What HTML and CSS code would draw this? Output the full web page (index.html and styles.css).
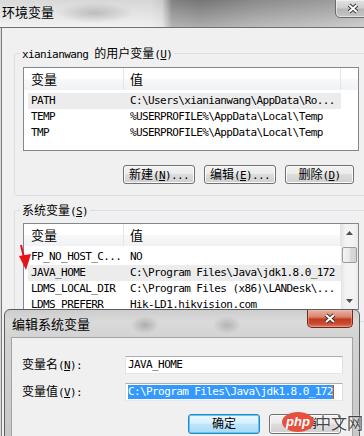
FILE: index.html
```html
<!DOCTYPE html>
<html lang="zh-CN">
<head>
    <meta charset="UTF-8">
    <title>环境变量</title>
    <link rel="stylesheet" href="styles.css">
</head>
<body>
    <div class="window">
        <div class="titlebar">
            <span class="title">环境变量</span>
            <span class="close close-gray">
                <svg width="12" height="11" viewBox="0 0 12 11"><path d="M2 2 L10 9 M10 2 L2 9" stroke="#3a3a3a" stroke-width="4"/><path d="M2 2 L10 9 M10 2 L2 9" stroke="#fff" stroke-width="2"/></svg>
            </span>
        </div>

        <div class="client">
            <fieldset class="group group-user">
                <legend>xianianwang <span class="zh">的用户变量</span>(<u>U</u>)</legend>
                <div class="list list-user">
                    <div class="list-body">
                        <div class="list-head">
                            <div class="head-col head-name">变量</div>
                            <div class="head-col head-value">值</div>
                        </div>
                        <div class="row selected"><span class="name">PATH</span><span class="value">C:\Users\xianianwang\AppData\Ro...</span></div>
                        <div class="row"><span class="name">TEMP</span><span class="value">%USERPROFILE%\AppData\Local\Temp</span></div>
                        <div class="row"><span class="name">TMP</span><span class="value">%USERPROFILE%\AppData\Local\Temp</span></div>
                    </div>
                    <div class="head-filler"></div>
                </div>
                <div class="btn-row">
                    <button class="btn"><span class="zh">新建</span>(<u>N</u>)...</button>
                    <button class="btn"><span class="zh">编辑</span>(<u>E</u>)...</button>
                    <button class="btn btn-narrow"><span class="zh">删除</span>(<u>D</u>)</button>
                </div>
            </fieldset>

            <fieldset class="group group-system">
                <legend><span class="zh">系统变量</span>(<u>S</u>)</legend>
                <div class="list list-system">
                    <div class="list-body">
                        <div class="list-head">
                            <div class="head-col head-name">变量</div>
                            <div class="head-col head-value">值</div>
                        </div>
                        <div class="row"><span class="name">FP_NO_HOST_C...</span><span class="value">NO</span></div>
                        <div class="row selected"><span class="name">JAVA_HOME</span><span class="value">C:\Program Files\Java\jdk1.8.0_172</span></div>
                        <div class="row"><span class="name">LDMS_LOCAL_DIR</span><span class="value">C:\Program Files (x86)\LANDesk\...</span></div>
                        <div class="row"><span class="name">LDMS_PREFERR</span><span class="value">Hik-LD1.hikvision.com</span></div>
                    </div>
                    <div class="scrollbar">
                        <div class="sb-btn"><svg width="7" height="4" viewBox="0 0 7 4"><polygon points="0,4 3.5,0 7,4" fill="#505050"/></svg></div>
                        <div class="sb-track"><div class="sb-thumb"></div></div>
                        <div class="sb-btn"><svg width="7" height="4" viewBox="0 0 7 4"><polygon points="0,0 7,0 3.5,4" fill="#505050"/></svg></div>
                    </div>
                </div>
            </fieldset>
        </div>
    </div>

    <!-- red arrow drawn on the screenshot -->
    <svg class="arrow" width="18" height="30" viewBox="0 0 18 30">
        <path d="M5 3 L9 20" stroke="#e5121b" stroke-width="2"/>
        <polygon points="3,14 15,12 10,28" fill="#e5121b"/>
    </svg>

    <div class="dialog">
        <div class="dialog-title">编辑系统变量</div>
        <span class="close close-red">
            <svg width="12" height="11" viewBox="0 0 12 11"><path d="M2 2 L10 9 M10 2 L2 9" stroke="#4a2a22" stroke-width="4"/><path d="M2 2 L10 9 M10 2 L2 9" stroke="#fff" stroke-width="2"/></svg>
        </span>
        <div class="dialog-client">
            <div class="form">
                <label><span class="zh">变量名</span>(<u>N</u>):</label>
                <div class="field">JAVA_HOME</div>
                <label><span class="zh">变量值</span>(<u>V</u>):</label>
                <div class="field"><span class="selection">C:\Program Files\Java\jdk1.8.0_172</span><span class="caret"></span></div>
            </div>
            <div class="dialog-buttons">
                <button class="btn btn-default"><span class="zh">确定</span></button>
                <button class="btn"><span class="zh">取消</span></button>
            </div>
        </div>
    </div>

    <div class="watermark">
        <span class="wm-php">php</span><span class="wm-cn">中文网</span>
    </div>
</body>
</html>
```

FILE: styles.css
```css
* {
    box-sizing: border-box;
}

body {
    margin: 0;
    width: 364px;
    height: 436px;
    overflow: hidden;
    position: relative;
    background: #d9d9d9;
    color: #000;
    font: 11px/16px "DejaVu Sans Mono", "Noto Sans CJK SC", monospace;
    letter-spacing: -0.6px;
}

.zh {
    font-family: "Noto Sans CJK SC", sans-serif;
    font-size: 12px;
    letter-spacing: 0;
}

u {
    text-decoration: underline;
}

/* outer window */
.titlebar {
    position: relative;
    height: 28px;
    border-bottom: 1px solid #707070;
    background:
        radial-gradient(ellipse 38px 10px at 95px 13px, rgba(140,140,140,0.45), transparent),
        linear-gradient(180deg, rgba(0,0,0,0.08) 0%, rgba(255,255,255,0.35) 100%),
        linear-gradient(90deg, #ececec 0, #e8e8e8 150px, #dcdcdc 162px, #8c8c8c 172px, #7f7f7f 200px, #979797 260px, #a7a7a7 330px, #b3b3b3 364px);
}

.title {
    display: block;
    padding-left: 2px;
    font: 13px/24px "Noto Sans CJK SC", sans-serif;
    letter-spacing: 0;
}

.close {
    position: absolute;
    top: -1px;
    width: 46px;
    height: 19px;
    display: flex;
    align-items: center;
    justify-content: center;
    border-radius: 0 0 5px 5px;
}

.close-gray {
    right: -17px;
    border: 1px solid #6a6a6a;
    background: linear-gradient(180deg, #e2e2e2 0%, #cfcfcf 45%, #b7b7b7 55%, #c6c6c6 100%);
    box-shadow: inset 0 0 0 1px rgba(255,255,255,0.5);
}

.close-gray svg {
    margin-right: 10px;
}

.client {
    height: 408px;
    margin-left: 1px;
    padding-top: 17px;
    border-left: 1px solid #7c7c7c;
    background: #f0f0f0;
    overflow: hidden;
}

/* group boxes */
.group {
    min-width: 0;
    margin: 0 -30px 0 12px;
    padding: 0 0 11px 8px;
    border: 1px solid #d5dfe5;
    border-radius: 3px;
}

.group legend {
    height: 16px;
    margin-left: -3px;
    padding: 0 2px;
    line-height: 16px;
}

.group-system {
    margin-top: 6px;
}

/* list views */
.list {
    display: flex;
    width: 336px;
    margin-top: 6px;
    border: 1px solid #828790;
    background: #fff;
}

.list-user {
    height: 84px;
}

.list-system {
    height: 87px;
    margin-top: 5px;
}

.list-body {
    width: 317px;
}

.list-head {
    display: flex;
    height: 22px;
    margin-bottom: 3px;
    background: linear-gradient(180deg, #fff 0%, #fff 50%, #f7f8f9 50%, #f1f2f4 100%);
}

.head-col {
    height: 22px;
    border-right: 1px solid #e3e5e8;
    font: 13px/22px "Noto Sans CJK SC", sans-serif;
    letter-spacing: 0;
}

.head-name {
    width: 100px;
    padding-left: 7px;
}

.head-value {
    flex: 1;
    padding-left: 6px;
}

.head-filler {
    width: 17px;
    height: 22px;
    background: linear-gradient(180deg, #fff 0%, #fff 50%, #f7f8f9 50%, #f1f2f4 100%);
}

.row {
    display: flex;
    height: 16px;
    margin-left: 4px;
    padding-left: 3px;
    white-space: nowrap;
}

.row.selected {
    background: #ececec;
}

.row .name {
    width: 99px;
    overflow: hidden;
}

.row .value {
    flex: 1;
    overflow: hidden;
}

.scrollbar {
    width: 17px;
    display: flex;
    flex-direction: column;
    background: linear-gradient(90deg, #e3e3e3 0%, #f3f3f3 25%, #f3f3f3 75%, #eaeaea 100%);
}

.sb-btn {
    height: 17px;
    display: flex;
    align-items: center;
    justify-content: center;
}

.sb-track {
    flex: 1;
}

.sb-thumb {
    height: 16px;
    margin: 6px 1px 0;
    border: 1px solid #9b9b9b;
    border-radius: 2px;
    background: linear-gradient(90deg, #f4f4f4 0%, #e8e8e8 50%, #dadada 51%, #d2d2d2 100%);
}

/* buttons */
.btn-row {
    display: flex;
    justify-content: flex-end;
    gap: 9px;
    width: 336px;
    margin-top: 14px;
    padding-right: 5px;
}

.btn {
    width: 72px;
    height: 19px;
    padding: 0;
    border: 1px solid #707070;
    border-radius: 3px;
    background: linear-gradient(180deg, #f2f2f2 0%, #ebebeb 45%, #dddddd 50%, #cfcfcf 100%);
    box-shadow: inset 0 0 0 1px #fbfbfb;
    color: #000;
    font: inherit;
    letter-spacing: inherit;
    line-height: 16px;
    white-space: nowrap;
}

.btn-narrow {
    width: 69px;
}

.btn-default {
    border-color: #3c7fb1;
    background: linear-gradient(180deg, #eaf6fd 0%, #d9f0fc 45%, #bee6fd 50%, #a7d9f5 100%);
    box-shadow: inset 0 0 0 1px #48d1ff;
}

/* arrow */
.arrow {
    position: absolute;
    left: 16px;
    top: 242px;
}

/* edit dialog */
.dialog {
    position: absolute;
    left: 4px;
    top: 309px;
    width: 356px;
    height: 140px;
    padding: 0 6px;
    border: 1px solid #5c5c5c;
    border-radius: 6px 6px 0 0;
    background:
        radial-gradient(ellipse 14px 9px at 140px 15px, rgba(110,110,110,0.4), transparent),
        radial-gradient(ellipse 14px 9px at 222px 15px, rgba(110,110,110,0.35), transparent),
        linear-gradient(180deg, #cdcdcd 0, #dadada 12px, #d3d3d3 27px, #c6c6c6 100%);
}

.dialog-title {
    height: 27px;
    padding-left: 1px;
    font: 13px/27px "Noto Sans CJK SC", sans-serif;
    letter-spacing: 0;
}

.close-red {
    top: 0;
    right: 6px;
    height: 18px;
    border: 1px solid #6e2a1c;
    border-top: none;
    background: linear-gradient(180deg, #eab1a2 0%, #d98670 40%, #c23a20 55%, #c94a2f 80%, #dc7c62 100%);
    box-shadow: inset 0 0 0 1px rgba(255,200,180,0.4);
}

.dialog-client {
    height: 110px;
    padding: 18px 9px 0 10px;
    border: 1px solid #a3a3a3;
    background: #f0f0f0;
}

.form {
    display: grid;
    grid-template-columns: 103px 1fr;
    row-gap: 9px;
    align-items: center;
}

.field {
    height: 18px;
    padding-left: 2px;
    border: 1px solid;
    border-color: #abadb3 #dbdfe6 #e3e9ef #e2e3ea;
    background: #fff;
    white-space: nowrap;
    overflow: hidden;
}

.selection {
    display: inline-block;
    height: 14px;
    margin-top: 1px;
    vertical-align: top;
    line-height: 14px;
    background: #3399ff;
    color: #fff;
}

.caret {
    display: inline-block;
    width: 1px;
    height: 14px;
    margin-top: 1px;
    vertical-align: top;
    background: #c65a00;
}

.dialog-buttons {
    display: flex;
    justify-content: flex-end;
    gap: 9px;
    margin-top: 13px;
    padding-right: 2px;
}

.dialog-buttons .btn {
    height: 20px;
}

/* site watermark */
.watermark {
    position: absolute;
    left: 282px;
    top: 412px;
    display: flex;
    align-items: center;
}

.wm-php {
    width: 32px;
    height: 20px;
    border-radius: 50%;
    background: #e6503c;
    color: #fff;
    font: italic bold 13px/20px "Liberation Sans", sans-serif;
    letter-spacing: 0;
    text-align: center;
}

.wm-cn {
    margin-left: 1px;
    color: rgba(40,40,40,0.85);
    font: 16px/20px "Noto Sans CJK SC", sans-serif;
    letter-spacing: 0;
    text-shadow: 0 0 2px #fff;
}
```
